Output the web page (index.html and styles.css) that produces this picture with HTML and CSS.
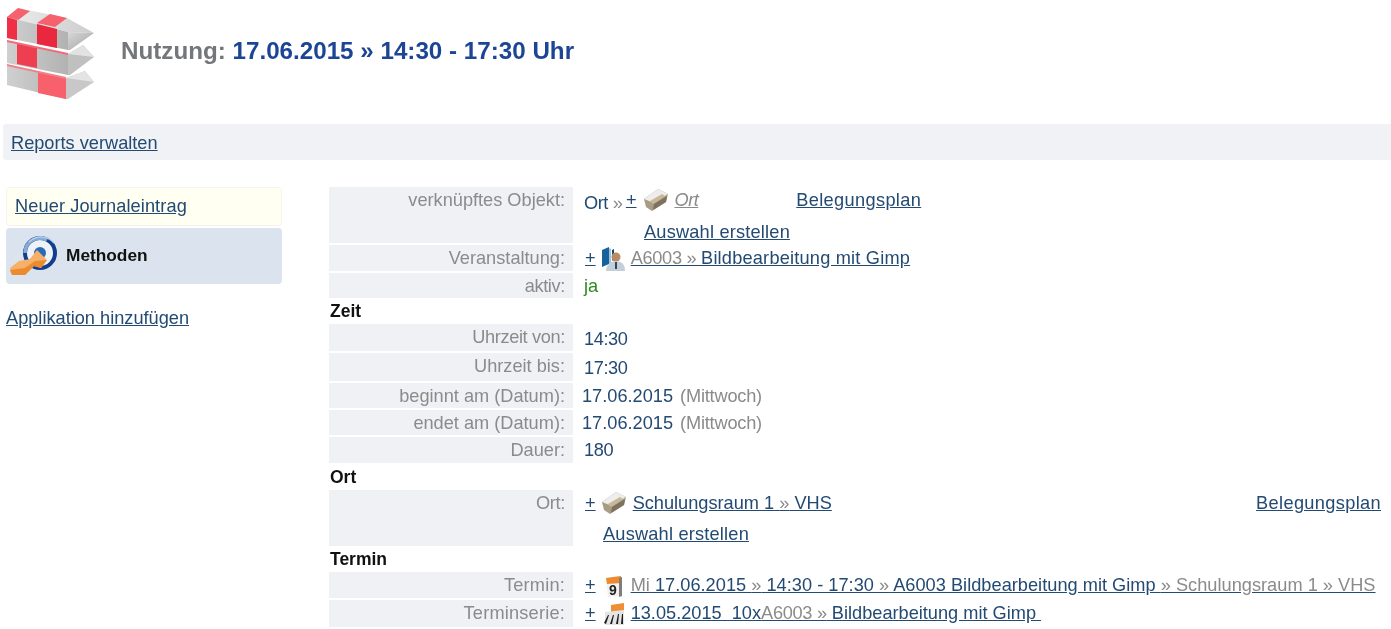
FILE: index.html
```html
<!DOCTYPE html>
<html lang="de">
<head>
<meta charset="utf-8">
<title>Nutzung</title>
<link rel="stylesheet" href="styles.css">
</head>
<body>
<header class="head">
  <svg class="logo" viewBox="0 0 100 105" width="100" height="105">
    <defs>
      <linearGradient id="tipA" x1="0" y1="0" x2="1" y2="1"><stop offset="0" stop-color="#d8d8d8"/><stop offset="1" stop-color="#a2a2a2"/></linearGradient>
      <linearGradient id="topA" x1="0" y1="0" x2="1" y2="0"><stop offset="0" stop-color="#eeeeee"/><stop offset="1" stop-color="#cccccc"/></linearGradient>
      <linearGradient id="front" x1="0" y1="0" x2="1" y2="0"><stop offset="0" stop-color="#d0d0d0"/><stop offset="1" stop-color="#b2b2b2"/></linearGradient>
    </defs>
    <!-- bottom arrow -->
    <path d="M7 65 L66 78 L66 99 L7 85Z" fill="url(#front)"/>
    <path d="M38 72 L66 78 L66 99 L38 93Z" fill="#f8606c"/>
    <path d="M7 64 L66 77 L66 79 L7 66Z" fill="#f0808a"/>
    <path d="M66 78 L85 71 L94 82 L68 99 L66 99Z" fill="#c8c8c8"/>
    <path d="M66 78 L85 71 L94 82Z" fill="#e4e4e4"/>
    <!-- middle arrow -->
    <path d="M7 41 L68 54 L68 75 L7 63Z" fill="url(#front)"/>
    <path d="M17 43 L37 47 L37 68 L17 64Z" fill="#ed3f50"/>
    <path d="M7 40 L68 53 L68 55 L7 42Z" fill="#f26a78"/>
    <path d="M68 54 L83 45 L94 57 L70 75 L68 75Z" fill="#c0c0c0"/>
    <path d="M68 54 L83 45 L94 57Z" fill="#e2e2e2"/>
    <!-- top arrow -->
    <path d="M7 17 L18 8 L67 18 L94 33 L68 32Z" fill="url(#topA)"/>
    <path d="M7 17 L18 8 L30 11 L17 21Z" fill="#f6616e"/>
    <path d="M37 23 L50 14 L67 18 L55 27Z" fill="#f6616e"/>
    <path d="M7 17 L68 32 L68 50 L7 38Z" fill="url(#front)"/>
    <path d="M7 17 L17 20 L17 40 L7 38Z" fill="#ef2f46"/>
    <path d="M37 24 L57 29 L57 48 L37 44Z" fill="#e9283f"/>
    <path d="M68 32 L94 33 L70 50 L68 50Z" fill="url(#tipA)"/>
  </svg>
  <h1 class="title"><span class="title-key">Nutzung:</span> 17.06.2015 » 14:30 - 17:30 Uhr</h1>
</header>

<nav class="bar"><a href="#">Reports verwalten</a></nav>

<div class="main">
  <aside class="side">
    <div class="box-new"><a href="#">Neuer Journaleintrag</a></div>
    <div class="box-method">
      <svg class="method-icon" viewBox="0 0 50 42" width="50" height="42">
        <circle cx="30" cy="18" r="15" fill="#eef3f8" stroke="#123f8d" stroke-width="4"/>
        <path d="M15 18 A15 15 0 0 1 37 5" fill="none" stroke="#86aad8" stroke-width="3.5"/>
        <path d="M19 7 A17 17 0 0 1 44 8" fill="none" stroke="#b7cde8" stroke-width="1.5"/>
        <circle cx="30" cy="18" r="6" fill="#2c6bb3"/>
        <path d="M0 33 L9 26 L20 24 L27 15 L37 25 L31 33 L24 31 L15 40 L2 40Z" fill="#f7b06a"/>
        <path d="M0 35 L15 33 L25 26 L37 25 L31 33 L24 31 L15 40 L2 40Z" fill="#ec8a2f"/>
      </svg>
      <b>Methoden</b>
    </div>
    <a class="add-app" href="#">Applikation hinzufügen</a>
  </aside>

  <section class="form">
    <div class="row h56">
      <div class="lab">verknüpftes Objekt:</div>
      <div class="val stack">
        <div class="line">
          <span class="t-ort">Ort</span><span class="sep">»</span><a class="plus plus-obj" href="#">+</a>
          <svg class="ic" viewBox="0 0 26 22" width="26" height="22"><path d="M1 10 L15 0 L25 5 L23 13 L9 22 L3 18Z" fill="#a89c84"/><path d="M1 10 L15 0 L25 5 L11 14Z" fill="#ededed"/><path d="M7 12 L19 5 L22 7 L10 15Z" fill="#c9b795"/><path d="M11 15 L24 7 L23 13 L10 21Z" fill="#7d7260"/></svg>
          <a class="it" href="#">Ort</a>
          <a class="bel-a wide" href="#">Belegungsplan</a>
        </div>
        <a class="ausw-a wide2" href="#">Auswahl erstellen</a>
      </div>
    </div>
    <div class="row h26 gap2">
      <div class="lab">Veranstaltung:</div>
      <div class="val line">
        <a class="plus first" href="#">+</a>
        <svg class="ic" viewBox="0 0 24 24" width="24" height="24"><path d="M1 3 L8 0 L8 17 L1 20Z" fill="#16629c"/><path d="M8 1 L10 2 L10 16 L8 17Z" fill="#9dc2dc"/><path d="M11 3 L13 2 L13 12 L11 14Z" fill="#174a70"/><circle cx="15" cy="10" r="4.5" fill="#b98a64"/><path d="M5 24 Q6 14 15 14 Q24 14 24 24Z" fill="#c3cfd9"/><path d="M14 15 L16 15 L16 22 L14 22Z" fill="#345"/></svg>
        <a class="mid" href="#"><span class="gr">A6003 » </span>Bildbearbeitung mit Gimp</a>
      </div>
    </div>
    <div class="row h25 gap2">
      <div class="lab lab-tight">aktiv:</div>
      <div class="val line yes">ja</div>
    </div>
    <h2 class="sec sec-zeit">Zeit</h2>
    <div class="row h27"><div class="lab lab-tight">Uhrzeit von:</div><div class="val line down num">14:30</div></div>
    <div class="row h28 gap2"><div class="lab">Uhrzeit bis:</div><div class="val line down num">17:30</div></div>
    <div class="row h25 gap2"><div class="lab">beginnt am (Datum):</div><div class="val line tight">17.06.2015 <span class="gr day">(Mittwoch)</span></div></div>
    <div class="row h25 gap2"><div class="lab">endet am (Datum):</div><div class="val line tight">17.06.2015 <span class="gr day">(Mittwoch)</span></div></div>
    <div class="row h26 gap2"><div class="lab">Dauer:</div><div class="val line num">180</div></div>
    <h2 class="sec sec-ort">Ort</h2>
    <div class="row h56">
      <div class="lab lab-tight">Ort:</div>
      <div class="val stack">
        <div class="line">
          <a class="plus first" href="#">+</a>
          <svg class="ic" viewBox="0 0 26 22" width="26" height="22"><path d="M1 10 L15 0 L25 5 L23 13 L9 22 L3 18Z" fill="#a89c84"/><path d="M1 10 L15 0 L25 5 L11 14Z" fill="#ededed"/><path d="M7 12 L19 5 L22 7 L10 15Z" fill="#c9b795"/><path d="M11 15 L24 7 L23 13 L10 21Z" fill="#7d7260"/></svg>
          <a href="#">Schulungsraum 1 <span class="gr">»</span> VHS</a>
          <a class="bel-b wide" href="#">Belegungsplan</a>
        </div>
        <a class="ausw-b wide2" href="#">Auswahl erstellen</a>
      </div>
    </div>
    <h2 class="sec">Termin</h2>
    <div class="row h26">
      <div class="lab lab-loose">Termin:</div>
      <div class="val line">
        <a class="plus first" href="#">+</a>
        <svg class="ic" viewBox="0 0 24 24" width="24" height="24"><path d="M5 4 L20 2 L21 22 L7 23Z" fill="#f1f1f1"/><path d="M5 4 L20 2 L20 9 L6 10Z" fill="#ee8a2c"/><path d="M18 4 L21 3 L21 22 L18 23Z" fill="#7e7e7e"/><text x="8" y="21" class="cal-num">9</text></svg>
        <a class="term" href="#"><span class="gr">Mi</span> 17.06.2015 <span class="gr">»</span> 14:30 - 17:30 <span class="gr">»</span> A6003 Bildbearbeitung mit Gimp <span class="gr">» Schulungsraum 1 » VHS</span></a>
      </div>
    </div>
    <div class="row h27 gap2">
      <div class="lab lab-loose">Terminserie:</div>
      <div class="val line">
        <a class="plus first" href="#">+</a>
        <svg class="ic" viewBox="0 0 24 24" width="24" height="24"><path d="M10 3 L23 1 L23 10 L10 11Z" fill="#ee8f33"/><path d="M4 10 L23 8 L23 23 L4 23Z" fill="#e4e4e4"/><path d="M3 21 L7 13 L8 13 L5 22Z M9 22 L12 13 L13 13 L11 22Z M15 22 L17 12 L18 12 L17 22Z M20 22 L21 12 L22 12 L22 22Z" fill="#1d1d1d"/></svg>
        <a class="ser" href="#">13.05.2015&nbsp; 10x<span class="gr">A6003 »</span> Bildbearbeitung mit Gimp&nbsp;</a>
      </div>
    </div>
  </section>
</div>
</body>
</html>
```
FILE: styles.css
```css
* { box-sizing: border-box; }
html, body { margin: 0; padding: 0; }
body {
  width: 1391px;
  height: 629px;
  overflow: hidden;
  background: #fff;
  color: #234a73;
  font-family: "Liberation Sans", Arial, sans-serif;
  font-size: 18.2px;
  line-height: 20px;
  filter: blur(0.4px);
}
a { color: #234a73; text-decoration: underline; }
.head { display: flex; align-items: flex-start; height: 124px; }
.logo { flex: none; filter: blur(0.5px); }
.title { margin: 35px 0 0 21px; font-size: 24.2px; line-height: 32px; font-weight: bold; color: #1c4595; }
.title-key { color: #73767a; }
.bar { height: 36px; margin-left: 3px; padding: 9px 8px; background: #f0f2f6; border-radius: 3px 0 0 3px; }
.main { display: flex; padding: 27px 0 0 6px; }
.side { flex: none; width: 276px; margin-right: 47px; }
.box-new { height: 39px; padding: 8px 8px; background: #fffff2; border: 1px solid #f4f4ec; border-radius: 3px; letter-spacing: 0.1px; }
.box-method { display: flex; align-items: center; gap: 6px; height: 56px; margin-top: 2px; padding: 0 4px; background: #dae3ee; border-radius: 4px; font-size: 17.3px; }
.box-method b { color: #111; margin-bottom: 2px; }
.method-icon { flex: none; }
.add-app { display: inline-block; margin-top: 24px; }
.form { flex: 1; min-width: 0; }
.row { display: flex; }
.gap2 { margin-top: 2px; }
.h25 { height: 25px; }
.h26 { height: 26px; }
.h27 { height: 27px; }
.h28 { height: 28px; }
.h56 { height: 56px; }
.lab { flex: none; width: 244px; padding: 3px 8px 0 0; text-align: right; color: #8b8b8b; background: #f0f1f5; }
.lab-tight { letter-spacing: -0.35px; }
.lab-loose { letter-spacing: 0.2px; }
.val { flex: 1; min-width: 0; padding: 3px 10px 0 11px; }
.line { display: flex; align-items: flex-start; white-space: pre; }
.down { padding-top: 5px; }
.num { letter-spacing: -0.4px; }
.val.tight { padding-left: 9px; }
.stack { display: block; padding-top: 3px; padding-right: 10px; }
.t-ort { margin-top: 3px; letter-spacing: -0.5px; }
.sep { color: #8b8b8b; margin: 3px 3px 0 5px; }
.plus { margin-right: 5px; }
.plus.first { margin-left: 1px; }
.plus-obj { margin-right: 6px; }
.ic { flex: none; margin: -1px 6px 0 0; }
.gr { color: #8b8b8b; }
.day { margin-left: 2px; letter-spacing: -0.2px; }
.it { font-style: italic; color: #8b8b8b; letter-spacing: -0.5px; }
.wide { letter-spacing: 0.35px; }
.wide2 { letter-spacing: 0.2px; }
.mid { letter-spacing: 0.2px; }
.mid .gr { letter-spacing: -0.3px; }
.term { letter-spacing: 0.02px; }
.ser .gr { letter-spacing: -0.3px; }
.bel-a { margin-left: 98px; }
.bel-b { margin-left: auto; }
.ausw-a { display: block; margin: 9px 0 0 60px; width: max-content; }
.ausw-b { display: block; margin: 10px 0 0 19px; width: max-content; }
.yes { color: #2b8a1f; }
.sec { margin: 0; height: 26px; padding: 3px 0 0 1px; font-size: 17.5px; line-height: 20px; font-weight: bold; color: #111; }
.sec-zeit { height: 26px; padding-top: 3px; }
.sec-ort { height: 27px; padding-top: 4px; }
.cal-num { font-size: 14px; font-weight: bold; fill: #222; }
```
